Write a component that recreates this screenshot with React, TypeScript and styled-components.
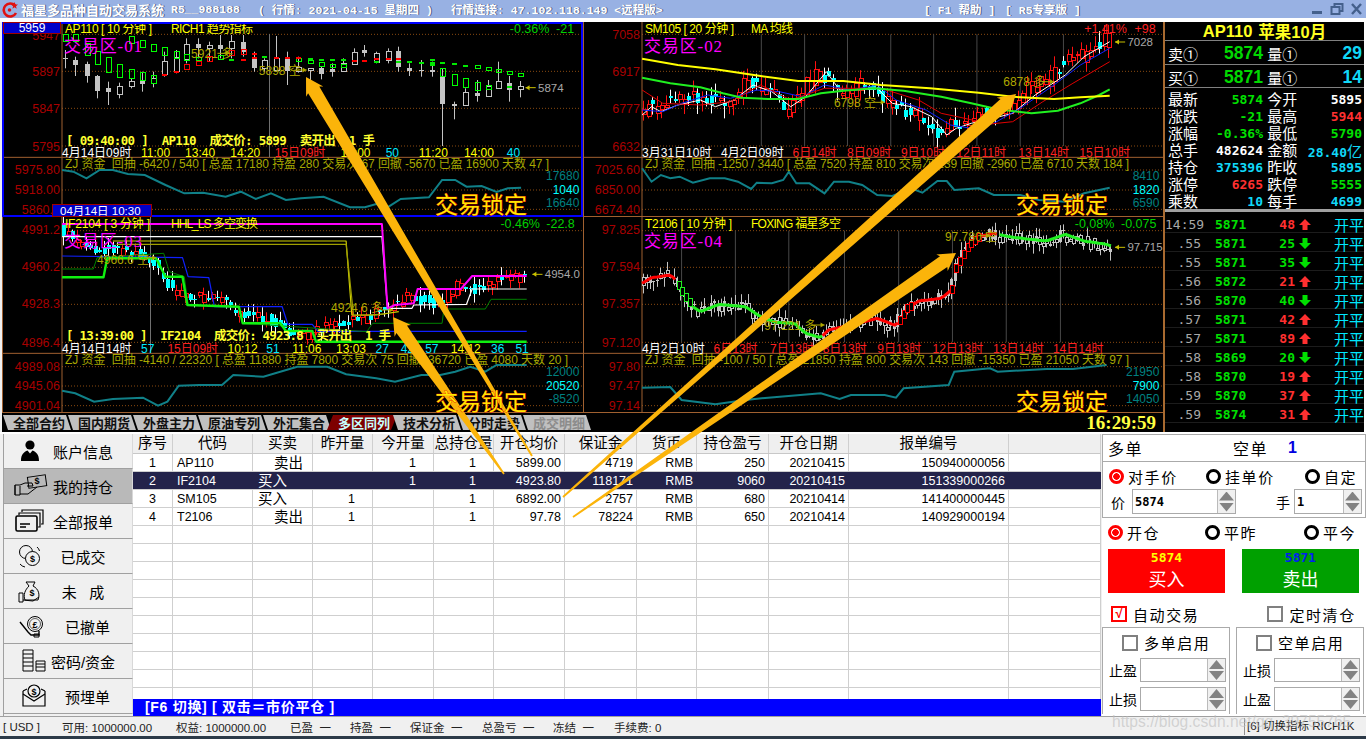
import React from 'react';
import styled, { createGlobalStyle } from 'styled-components';

const SANS = `"Liberation Sans", "Noto Sans CJK SC", sans-serif`;
const MONO = `"DejaVu Sans Mono", "Noto Sans CJK SC", monospace`;
const SERIF = `"Liberation Serif", "Noto Sans CJK SC", serif`;
const ZX = 2.658;

const Global = createGlobalStyle`
  html, body { margin: 0; padding: 0; background: #f0f0f0; }
  * { box-sizing: border-box; }
`;

const Page = styled.div`
  position: relative; width: 1366px; height: 739px; overflow: hidden;
  background: #f0f0f0; display: flex; flex-direction: column;
  font-family: ${SANS}; color: #000;
`;

/* ---------- title bar ---------- */
const TitleBar = styled.div`
  height: 18px; background: #98b1e3; display: flex; align-items: center;
  color: #fff; flex: none; padding-left: 2px; white-space: pre;
`;
const TitleName = styled.span`
  font-size: 13px; font-weight: 700; margin-left: 2px; width: 150px;
  text-shadow: 1px 0 #4a5a80;
`;
const TitleMono = styled.span<{ $w: number; $ml?: number }>`
  font: 700 11.5px ${`"Liberation Mono", "Noto Sans CJK SC", monospace`};
  width: ${p => p.$w}px; margin-left: ${p => p.$ml ?? 0}px;
  text-shadow: 1px 0 #4a5a80;
`;
const WinButtons = styled.div`
  display: flex; align-items: center; gap: 6px; margin-left: auto; padding-right: 3px;
  svg { display: block; }
`;
const TopGap = styled.div` height: 4px; background: #fff; flex: none; `;

/* ---------- workspace ---------- */
const Workspace = styled.div`
  height: 410px; flex: none; display: flex; background: #000;
  border-left: 2px solid #f0f0f0;
`;
const LeftColumn = styled.div` width: 1161px; display: flex; flex-direction: column; `;
const ChartGrid = styled.div`
  display: grid; grid-template-columns: 581px 580px; grid-template-rows: 195px 196px; flex: none;
`;
const ChartSvg = styled.svg` display: block; width: 100%; height: 100%; background: #000; `;
const ChartText = styled.text<{ $size?: number; $color?: string; $weight?: number; $family?: string }>`
  font-family: ${p => p.$family ?? SANS};
  font-size: ${p => p.$size ?? 12}px;
  font-weight: ${p => p.$weight ?? 400};
  fill: ${p => p.$color ?? '#fff'};
`;
const TabRow = styled.div`
  height: 19px; display: flex; align-items: center; background: #000; flex: none; position: relative;
`;
const Tab = styled.div<{ $active?: boolean; $dim?: boolean }>`
  width: 70px; height: 15px; margin-right: -5px; flex: none;
  display: flex; align-items: center; justify-content: center;
  font-size: 13px; font-weight: 700; padding-left: 4px;
  background: ${p => (p.$active ? '#7d0000' : '#c0c0c0')};
  color: ${p => (p.$active ? '#c8ffff' : p.$dim ? '#8c8c8c' : '#101010')};
  clip-path: ${p => p.$active
    ? 'polygon(6px 0, 100% 0, calc(100% - 6px) 100%, 0 100%)'
    : 'polygon(1px 0, calc(100% - 6px) 0, calc(100% - 1px) 100%, 6px 100%)'};
`;
const Clock = styled.div`
  margin-left: auto; padding-right: 7px; color: #ffff40;
  font: 700 19px ${SERIF};
`;

/* ---------- info panel ---------- */
const InfoPanel = styled.div`
  width: 203px; flex: none; border-left: 2px solid #a86a30;
  background: #000; color: #fff; display: flex; flex-direction: column;
  border-right: 2px solid #fff; height: 410px;
`;
const InfoHeader = styled.div`
  height: 19px; display: flex; align-items: center; justify-content: center; gap: 6px;
  color: #ffff20; font-size: 16.5px; font-weight: 700; border-bottom: 1px solid #808080; flex: none;
`;
const QuoteRow = styled.div`
  height: 23.5px; display: grid; grid-template-columns: 95px 1fr; flex: none;
  border-bottom: 1px solid #808080; padding: 2px 2px 0 3px;
`;
const QuoteCell = styled.div`
  display: flex; align-items: center; justify-content: space-between; font-size: 15px;
`;
const QuoteValue = styled.span<{ $color: string }>`
  color: ${p => p.$color}; font: 700 17.5px "Liberation Sans", sans-serif;
`;
const StatGrid = styled.div`
  display: grid; grid-template-columns: 95px 1fr; grid-auto-rows: 17px;
  padding: 3px 2px 0 3px; flex: none; border-bottom: 3px solid #a0a0a0; height: 124px;
`;
const StatCell = styled.div`
  display: flex; align-items: center; justify-content: space-between; font-size: 15px;
  line-height: 17px;
`;
const StatValue = styled.span<{ $color: string }>`
  color: ${p => p.$color}; font: 700 13px ${MONO};
`;
const Unit = styled.span` font: 400 15px "Noto Sans CJK SC", sans-serif; `;
const TradeList = styled.div` flex: 1; display: flex; flex-direction: column; padding-top: 2px; `;
const TradeRow = styled.div`
  height: 19px; display: grid; flex: none;
  grid-template-columns: 36px 50px 44px 18px 1fr; align-items: center;
  border-bottom: 1px solid #1c1c1c;
`;
const TradeTime = styled.span`
  color: #a8a8a8; font: 400 13px ${MONO}; text-align: right;
`;
const TradePrice = styled.span`
  color: #00e000; font: 700 13px ${MONO}; padding-left: 14px;
`;
const TradeVol = styled.span<{ $up: boolean }>`
  color: ${p => (p.$up ? '#ff3030' : '#00e000')}; font: 700 13px ${MONO}; text-align: right;
`;
const TradeArrow = styled.svg` display: block; margin-left: 4px; `;
const TradeFlag = styled.span`
  color: #00e8ff; font-size: 15px; text-align: right; white-space: nowrap;
`;

/* ---------- lower area ---------- */
const Lower = styled.div`
  flex: none; height: 284px; display: flex; border-top: 2px solid #fff; background: #f0f0f0;
`;
const Sidebar = styled.div`
  width: 130px; margin-left: 3px; display: flex; flex-direction: column; flex: none;
  border-left: 1px solid #a0a0a0;
`;
const NavButton = styled.div<{ $active?: boolean }>`
  height: 35px; flex: none; display: flex; align-items: center;
  background: ${p => (p.$active ? '#b9b9b9' : '#f0f0f0')};
  border-bottom: 1px solid #a0a0a0; border-right: 1px solid #d8d8d8;
`;
const NavIcon = styled.svg` width: 44px; height: 26px; flex: none; display: block; color: #000; `;
const NavLabel = styled.span<{ $shift?: number }>`
  width: 76px; text-align: center; font-size: 15px; white-space: pre; margin-left: -3px;
  padding-left: ${p => p.$shift ?? 0}px;
`;

const TableWrap = styled.div` width: 968px; flex: none; display: flex; flex-direction: column; `;
const HeadRow = styled.div`
  height: 20px; display: flex; background: #efefef; flex: none; border-bottom: 1px solid #c8c8c8;
`;
const HeadCell = styled.div<{ $w: number }>`
  width: ${p => p.$w}px; flex: none; text-align: center; font-size: 14.5px; line-height: 18px;
  border-right: 1px solid #cfcfcf; white-space: nowrap; overflow: hidden;
`;
const Body = styled.div` height: 245px; overflow: hidden; background: #fff; flex: none; `;
const DataRow = styled.div<{ $sel?: boolean }>`
  height: 18px; display: flex; border-bottom: 1px solid #cfcfcf;
  background: ${p => (p.$sel ? '#23234a' : '#fff')};
  color: ${p => (p.$sel ? '#fff' : '#000')};
`;
const DataCell = styled.div<{ $w: number; $align?: string; $pl?: number; $pr?: number; $cjk?: boolean; $sel?: boolean }>`
  width: ${p => p.$w}px; flex: none; border-right: 1px solid ${p => (p.$sel ? '#23234a' : '#cfcfcf')};
  text-align: ${p => p.$align ?? 'right'};
  padding-left: ${p => p.$pl ?? 0}px; padding-right: ${p => p.$pr ?? 0}px; padding-top: 1px;
  font-size: ${p => (p.$cjk ? 14.5 : 12.5)}px; line-height: 16px; white-space: nowrap; overflow: hidden;
`;
const FootBar = styled.div`
  height: 17px; background: #0000ff; color: #fff; font-size: 14px; font-weight: 700; letter-spacing: 0.7px;
  padding-left: 12px; line-height: 17px; flex: none; white-space: pre;
`;

const OrderPanel = styled.div`
  width: 264px; margin-left: 1px; flex: none; display: flex; flex-direction: column; background: #fff;
  font-size: 15px;
`;
const SideRow = styled.div`
  height: 28px; flex: none; border: 1px solid #aaa; display: flex; align-items: center; padding-left: 5px;
  font-size: 16px; letter-spacing: 1.5px;
`;
const SideText = styled.span<{ $ml?: number; $color?: string }>`
  margin-left: ${p => p.$ml ?? 0}px; color: ${p => p.$color ?? '#000'};
`;
const PriceBox = styled.div`
  height: 56px; flex: none; border: 1px solid #aaa; border-top: none; padding: 4px 0 0 6px;
`;
const RadioRow = styled.div`
  display: grid; grid-template-columns: 97px 99px 1fr; align-items: center; height: 20px;
`;
const RadioItem = styled.div` display: flex; align-items: center; gap: 4px; white-space: nowrap; letter-spacing: 1.6px; font-size: 15px; `;
const RadioDot = styled.span<{ $on?: boolean }>`
  width: 15px; height: 15px; border-radius: 50%; flex: none; display: block;
  border: 3px solid ${p => (p.$on ? '#ff0000' : '#000')};
  background: ${p => (p.$on ? 'radial-gradient(circle, #ff0000 0 3px, #fff 3.5px)' : '#fff')};
`;
const SpinRow = styled.div` display: flex; align-items: center; margin-top: 3px; `;
const SmallLabel = styled.span<{ $ml?: number; $w: number }>`
  width: ${p => p.$w}px; margin-left: ${p => p.$ml ?? 0}px; flex: none; font-size: 14px; white-space: nowrap;
`;
const SpinBox = styled.div<{ $w: number; $h?: number }>`
  width: ${p => p.$w}px; height: ${p => p.$h ?? 25}px; flex: none; display: flex; align-items: center;
  border: 1px solid #aaa; background: #fff; font: 700 12px ${MONO}; padding-left: 2px;
`;
const SpinValue = styled.span` flex: 1; `;
const Spinner = styled.div`
  width: 18px; height: 100%; flex: none; border-left: 1px solid #bbb; display: flex; flex-direction: column;
  justify-content: center; align-items: center; gap: 2px; background: #f0f0f0;
`;
const Tri = styled.i<{ $down?: boolean }>`
  display: block; width: 15px; height: 9px; background: #828282;
  clip-path: ${p => (p.$down ? 'polygon(0 0, 100% 0, 50% 100%)' : 'polygon(50% 0, 100% 100%, 0 100%)')};
`;
const OpenSection = styled.div` height: 109px; flex: none; padding: 4px 0 0 6px; `;
const BuySell = styled.div` display: flex; gap: 17px; margin-top: 7px; `;
const TradeBtn = styled.div<{ $bg: string }>`
  width: 117px; height: 44px; background: ${p => p.$bg}; color: #fff; padding-top: 1px;
  display: flex; flex-direction: column; align-items: center;
  font-size: 18px; line-height: 26px;
`;
const BtnPrice = styled.span<{ $color: string }>`
  color: ${p => p.$color}; font: 700 13px/16px ${MONO}; margin-bottom: 1px;
`;
const CheckRow = styled.div` display: flex; align-items: center; margin: 12px 0 0 3px; letter-spacing: 1.6px; height: 18px; `;
const CheckBox = styled.span<{ $on?: boolean }>`
  width: 16px; height: 16px; flex: none; display: flex; align-items: center; justify-content: center;
  border: 2px solid ${p => (p.$on ? '#ff0000' : '#808080')}; background: #fff;
  color: #ff0000; font-size: 13px; line-height: 12px; font-weight: 700; margin-right: 6px; letter-spacing: 0;
`;
const Spacer = styled.span<{ $w: number }>` width: ${p => p.$w}px; flex: none; `;
const LimitRow = styled.div` display: flex; gap: 6px; height: 87px; flex: none; padding-right: 1px; `;
const LimitBox = styled.div`
  width: 128px; border: 1px solid #aaa; border-bottom: none; padding: 4px 0 0 6px; background: #fff; flex: none;
`;
const LimitHead = styled.div` display: flex; align-items: center; padding-left: 13px; height: 21px; letter-spacing: 1.6px; `;
const LimitField = styled.div` display: flex; align-items: center; margin-top: 5px; `;

const StatusBar = styled.div`
  height: 20px; flex: none; display: flex; align-items: center; font-size: 12px; color: #222;
  border-top: 1px solid #a0a0a0; padding-left: 3px; position: relative; background: #f0f0f0; white-space: pre;
`;
const StatusItem = styled.span<{ $w: number }>` width: ${p => p.$w}px; flex: none; font-size: 11.5px; `;
const StatusRight = styled.div`
  margin-left: auto; width: 122px; height: 17px; border-left: 1px solid #909090; padding-left: 2px; font-size: 11.5px; line-height: 17px;
`;
const BottomEdge = styled.div` height: 3px; background: #2c3a48; flex: none; `;
const Watermark = styled.div`
  position: absolute; left: 1112px; top: 713px; color: rgba(190, 190, 190, 0.62);
  font: 15.6px "Liberation Sans", sans-serif; white-space: nowrap; pointer-events: none;
`;
const Overlay = styled.svg`
  position: absolute; left: 0; top: 0; width: 1366px; height: 739px; pointer-events: none;
`;

/* ---------- chart data ---------- */
type P = [number, number];
type Candle = [number, number, number, number, number, string];

interface Cfg {
  x0: number; y0: number; w: number; h: number; ox: number; oy: number;
  axisX: number; title: string; titleW: number; ind: string; indW: number;
  chg: string; chgX: number; chg2: string; chg2X: number; chgColor: string;
  area: string; candleW: number;
  grid: number[]; axis: [number, string][]; sepY: number; verticals?: number[];
  dates: [number, string, string][];
  legend: string; legendW: number; legendY: number;
  lower: [number, string][]; lowerGrid: number[];
  right: [number, string, string][]; teal: P[];
  lines: { pts: P[]; color: string; width: number }[];
  boxes?: { x: number; y: number; color: string }[];
  candles: Candle[];
  notes: [number, number, string, number, number][];
  price: [number, number, string];
  deal?: [string, number, number];
  areaY: number;
}

function rng(seed: number) {
  let s = seed;
  return () => { s = (s * 16807) % 2147483647; return s / 2147483647; };
}
function interp(path: P[], x: number) {
  for (let i = 0; i < path.length - 1; i++) {
    if (x >= path[i][0] && x <= path[i + 1][0]) {
      const t = (x - path[i][0]) / (path[i + 1][0] - path[i][0]);
      return path[i][1] + (path[i + 1][1] - path[i][1]) * t;
    }
  }
  return path[path.length - 1][1];
}
function gen(path: P[], step: number, seed: number, up: string, down: string, noise: number): Candle[] {
  const r = rng(seed); const out: Candle[] = [];
  for (let x = path[0][0] + 3; x < path[path.length - 1][0]; x += step) {
    const a = interp(path, x) + (r() - 0.5) * noise;
    const b = interp(path, x + step) + (r() - 0.5) * noise;
    const top = Math.min(a, b); const bot = Math.max(a, b) + 3;
    out.push([x, top - r() * noise * 0.9, bot + r() * noise * 0.9, top, bot, b < a ? up : down]);
  }
  return out;
}

const c1Candles: Candle[] = [
  [172,150,205,175,178,'f'],[200,170,228,180,195,'f'],[230,185,248,192,228,'f'],[258,225,295,228,272,'f'],
  [288,245,315,265,278,'f'],[317,248,295,258,282,'h'],[347,235,265,243,258,'h'],[378,215,275,243,252,'f'],
  [408,215,262,235,250,'h'],[437,155,230,183,222,'h'],[467,150,220,170,212,'h'],[495,115,190,133,178,'h'],
  [525,115,175,133,145,'f'],[555,125,185,135,145,'h'],[585,105,175,135,148,'f'],[615,105,175,123,145,'h'],
  [645,105,170,125,155,'f'],[675,155,215,175,205,'f'],[703,175,215,180,205,'h'],[733,108,215,175,210,'h'],
  [763,155,255,178,215,'f'],[793,170,218,200,212,'h'],[823,205,255,205,212,'h'],[852,200,238,205,222,'f'],
  [882,190,230,207,217,'f'],[912,175,215,190,215,'h'],[940,145,195,155,190,'h'],[968,135,170,150,160,'f'],
  [1000,155,190,158,185,'h'],[1030,145,190,152,180,'h'],[1059,140,215,152,200,'f'],[1088,190,228,205,213,'f'],
  [1118,180,230,210,214,'f'],[1147,185,230,210,215,'f'],[1176,205,438,232,312,'f'],[1208,305,358,313,318,'f'],
  [1237,265,318,277,315,'h'],[1267,240,305,280,288,'f'],[1296,240,290,258,287,'h'],[1325,185,265,243,265,'h'],
  [1354,228,305,250,270,'f'],[1383,243,292,258,268,'h'],
];
const gBox: P[] = [[172,103],[200,103],[230,130],[258,155],[288,172],[317,192],[347,208],[378,216],[408,226],[347,108],[378,120],[408,133],[437,142],[467,153],[495,163],[525,172],[585,165],[793,176],[823,181],[852,187],[882,194],[912,194],[1176,205],[1208,222],[1237,235],[1267,247],[1296,256],[1325,208],[1354,213],[1383,220],[1267,196],[1296,202]];
const gBoxH = [22,22,35,37,46,40,27,24,24,22,22,22,23,22,17,10,13,9,9,12,9,9,25,33,27,23,12,10,10,10,10,10];
const rBox: [number, number, number][] = [[495,193,15],[525,183,14],[555,170,15],[615,152,13],[645,148,14]];
const gDash: P[] = [[615,176],[703,168],[823,173],[852,176],[882,177],[912,176],[1000,182],[1059,182],[1088,183],[1118,185],[1147,186],[1176,186],[1208,188],[1237,194],[1147,178],[1147,192],[1354,258]];
const rDash: P[] = [[437,222],[467,214],[645,176],[675,158],[675,172],[733,170],[763,172],[793,170],[940,180],[968,180],[1000,175],[1030,175],[1059,175]];

const path2: P[] = [[165,365],[190,310],[220,320],[260,290],[320,285],[370,305],[410,300],[450,240],[500,265],[540,290],[555,340],[590,280],[640,215],[680,250],[720,285],[770,240],[810,290],[870,330],[915,345],[955,400],[1000,370],[1040,375],[1085,340],[1150,320],[1200,265],[1250,240],[1300,185],[1350,160],[1408,115]];
const path3: P[] = [[165,40],[240,95],[290,100],[400,120],[440,170],[470,230],[520,240],[600,250],[640,300],[720,310],[760,335],[820,365],[880,330],[960,310],[1040,285],[1090,240],[1170,265],[1230,205],[1280,225],[1320,200],[1400,178]];
const path4: P[] = [[165,205],[190,188],[240,180],[255,195],[270,225],[300,275],[320,290],[370,268],[440,275],[480,305],[520,322],[570,325],[600,355],[640,368],[660,345],[720,330],[790,310],[840,332],[870,280],[900,258],[960,250],[990,222],[1000,160],[1030,95],[1060,65],[1100,55],[1140,65],[1190,72],[1240,78],[1290,58],[1340,78],[1400,88],[1415,95]];

const seg4 = (a: number, b: number): P[] => {
  const pts: P[] = [];
  for (let x = a; x <= b; x += 8) pts.push([x, interp(path4, x)]);
  return pts;
};
const boxes4 = (a: number, b: number, color: string) => {
  const out: { x: number; y: number; color: string }[] = [];
  for (let x = a; x <= b; x += 10) out.push({ x, y: interp(path4, x), color });
  return out;
};

const charts: Cfg[] = [
  {
    x0: 2, y0: 22, w: 581, h: 195, ox: 0, oy: 0, axisX: 62, candleW: 5,
    title: 'AP110 [ 10 分钟 ]', titleW: 87, ind: 'RICH1 趋势指标', indW: 82,
    chg: '-0.36%', chgX: 1355, chg2: '-21', chg2X: 1478, chgColor: '#00d000',
    area: '交易区-01', areaY: 140,
    grid: [103, 214, 325, 438], axis: [[108, '5947'], [216, '5897'], [327, '5847'], [441, '5795']], sepY: 472,
    dates: [[165, '4月14日09时', '#fff'], [375, '11:00', '#ffff00'], [492, '13:40', '#ffff00'], [612, '14:20', '#ffff00'], [730, '15日09时', '#ff2020'], [905, '10:00', '#ffff00'], [1025, '50', '#00e8ff'], [1113, '11:20', '#ffff00'], [1233, '14:00', '#ffff00'], [1347, '40', '#00e8ff']],
    legend: 'ZJ 资金  回抽 -6420 / 540 [ 总盈 17180 持盈 280 交易次 67 回撤 -5670 已盈 16900 天数 47 ]', legendW: 484, legendY: 492,
    lower: [[510, '5975.80'], [570, '5918.00'], [630, '5860.2']], lowerGrid: [510, 570, 628],
    right: [[528, '17680', '#008080'], [570, '1040', '#00ffff'], [608, '16640', '#008080']],
    teal: [[165,510],[195,515],[230,535],[265,510],[300,510],[340,522],[385,525],[440,555],[490,580],[540,578],[600,590],[640,575],[680,597],[720,580],[760,600],[800,595],[860,590],[930,622],[970,622],[1000,612],[1030,622],[1065,597],[1140,592],[1175,540],[1210,540],[1240,560],[1280,558],[1320,576],[1350,565],[1385,563]],
    lines: [], candles: c1Candles,
    notes: [[508, 162, '5921 多', 610, 160], [688, 213, '5898 空', 815, 210]],
    price: [1430, 263, '5874'],
    deal: ['[ 09:40:00 ]  AP110  成交价: 5899  卖开出  1 手', 421, 309],
  },
  {
    x0: 583, y0: 22, w: 580, h: 195, ox: 580, oy: 0, axisX: 642, candleW: 4,
    title: 'SM105 [ 20 分钟 ]', titleW: 89, ind: 'MA 均线', indW: 42,
    chg: '+1.41%', chgX: 1340, chg2: '+98', chg2X: 1474, chgColor: '#ff2020',
    area: '交易区-02', areaY: 140,
    grid: [103, 214, 325, 438], axis: [[105, '7058'], [216, '6917'], [327, '6777'], [441, '6632']], sepY: 472,
    verticals: [482, 597, 711, 826, 940, 1055, 1170, 1285],
    dates: [[165, '3月31日10时', '#fff'], [375, '4月2日09时', '#fff'], [565, '6日14时', '#ff2020'], [710, '8日09时', '#ff2020'], [853, '9日10时', '#ff2020'], [1000, '12日11时', '#ff2020'], [1165, '13日14时', '#ff2020'], [1327, '15日10时', '#ff2020']],
    legend: 'ZJ 资金  回抽 -1250 / 3440 [ 总盈 7520 持盈 810 交易次 139 回撤 -2960 已盈 6710 天数 184 ]', legendW: 484, legendY: 492,
    lower: [[510, '7025.60'], [570, '6850.00'], [630, '6674.40']], lowerGrid: [510, 570, 628],
    right: [[528, '8410', '#008080'], [570, '1820', '#00ffff'], [608, '6590', '#008080']],
    teal: [[165,505],[190,545],[215,525],[240,535],[265,530],[300,548],[345,535],[385,535],[420,545],[455,567],[470,548],[510,550],[540,540],[555,515],[575,550],[610,550],[650,580],[675,545],[715,545],[750,555],[790,585],[830,588],[880,565],[910,578],[950,543],[975,543],[995,570],[1060,565],[1100,585],[1170,585],[1220,600],[1290,605],[1340,580],[1408,563]],
    lines: [
      { pts: [[165,345],[190,320],[215,335],[260,315],[320,300],[360,320],[410,300],[460,255],[510,275],[560,320],[600,290],[655,215],[690,270],[730,270],[790,265],[830,310],[880,320],[935,350],[975,405],[1000,385],[1040,370],[1080,360],[1150,340],[1210,285],[1290,225],[1340,170],[1408,125]], color: '#fff', width: 1 },
      { pts: [[165,330],[220,335],[270,310],[340,285],[400,295],[470,270],[530,275],[590,290],[650,255],[720,270],[790,255],[840,300],[920,330],[985,375],[1040,385],[1100,370],[1170,325],[1260,255],[1330,195],[1408,145]], color: '#1020ff', width: 1 },
      { pts: [[165,270],[220,310],[320,315],[400,305],[480,255],[560,300],[650,265],[720,265],[800,265],[900,300],[960,340],[1010,352],[1090,372],[1150,365],[1230,305],[1310,250],[1408,185]], color: '#e00000', width: 1 },
      { pts: [[165,233],[240,250],[320,262],[380,280],[430,293],[500,297],[580,297],[640,280],[700,272],[780,265],[860,272],[960,290],[1040,310],[1110,328],[1200,340],[1270,332],[1330,310],[1380,285],[1408,268]], color: '#20f020', width: 2 },
      { pts: [[165,176],[260,195],[360,208],[480,228],[580,243],[700,243],[800,255],[930,265],[1060,278],[1150,290],[1260,297],[1330,292],[1408,287]], color: '#ffff00', width: 2 },
    ],
    candles: gen(path2, 12, 71, 'r', 'c', 40),
    notes: [[675, 310, '6798 空', 810, 307], [1125, 245, '6878 多', 1260, 245]],
    price: [1455, 126, '7028'],
  },
  {
    x0: 2, y0: 217, w: 581, h: 196, ox: 0, oy: 215, axisX: 62, candleW: 4,
    title: 'IF2104 [ 3 分钟 ]', titleW: 85, ind: 'HHL_LS 多空变换', indW: 87,
    chg: '-0.46%', chgX: 1330, chg2: '-22.8', chg2X: 1452, chgColor: '#00d000',
    area: '交易区-03', areaY: 80,
    grid: [47, 157, 268, 382], axis: [[45, '4991.2'], [155, '4960.2'], [268, '4928.3'], [383, '4896.4']], sepY: 415,
    dates: [[165, '4月14日14时', '#fff'], [375, '57', '#00e8ff'], [445, '15日09时', '#ff2020'], [605, '10:12', '#ffff00'], [708, '51', '#00e8ff'], [777, '11:06', '#ffff00'], [893, '13:03', '#ffff00'], [998, '27', '#00e8ff'], [1065, '42', '#00e8ff'], [1130, '57', '#00e8ff'], [1198, '14:12', '#ffff00'], [1305, '36', '#00e8ff'], [1370, '51', '#00e8ff']],
    legend: 'ZJ 资金  回抽 -4140 / 22320 [ 总盈 11880 持盈 7800 交易次 75 回撤 -36720 已盈 4080 天数 20 ]', legendW: 503, legendY: 435,
    lower: [[455, '4989.08'], [513, '4945.06'], [572, '4901.04']], lowerGrid: [455, 513, 572],
    right: [[470, '12000', '#008080'], [512, '20520', '#00ffff'], [552, '-8520', '#008080']],
    teal: [[165,527],[200,535],[250,560],[300,552],[380,548],[420,572],[445,560],[475,512],[530,510],[590,510],[620,480],[700,485],[790,455],[870,455],[920,478],[1000,490],[1050,500],[1120,480],[1170,480],[1210,470],[1250,455],[1290,470],[1320,450],[1400,450]],
    lines: [
      { pts: [[165,123],[485,128],[500,185],[555,188],[570,275],[750,275],[765,328],[830,328],[845,349],[1400,349]], color: '#1020ff', width: 1.2 },
      { pts: [[165,162],[248,162],[258,128],[435,115],[450,170],[490,185],[500,270],[635,275],[645,325],[975,350],[990,325],[1175,325],[1180,282],[1290,282],[1305,253],[1400,253]], color: '#008000', width: 1 },
      { pts: [[300,78],[920,78],[935,300],[1000,300],[1060,290]], color: '#d0d000', width: 1.2 },
      { pts: [[310,88],[920,88],[940,302],[1025,297]], color: '#a0a000', width: 1.2 },
      { pts: [[165,187],[275,187],[285,130],[415,130],[440,185],[485,185],[498,270],[635,275],[645,325],[745,325],[760,348],[830,348],[840,380],[1400,380]], color: '#10f010', width: 2.4 },
      { pts: [[165,65],[1015,65],[1030,280],[1095,280],[1100,270],[1240,268],[1255,222],[1400,222]], color: '#fff', width: 1.2 },
      { pts: [[165,27],[1015,27],[1030,280],[1050,270],[1100,265],[1110,222],[1225,222],[1255,183],[1400,183]], color: '#ff00ff', width: 2 },
    ],
    candles: gen(path3, 12, 37, 'r', 'c', 30),
    notes: [[258, 135, '4966.6 空', 415, 128], [880, 280, '4924.6 多', 1045, 285]],
    price: [1448, 178, '4954.0'],
    deal: ['[ 13:39:00 ]  IF2104  成交价: 4923.8  买开出  1 手', 362, 325],
  },
  {
    x0: 583, y0: 217, w: 580, h: 196, ox: 580, oy: 215, axisX: 642, candleW: 3,
    title: 'T2106 [ 10 分钟 ]', titleW: 87, ind: 'FOXING 福星多空', indW: 90,
    chg: '-0.08%', chgX: 1315, chg2: '-0.075', chg2X: 1438, chgColor: '#00d000',
    area: '交易区-04', areaY: 80,
    grid: [47, 157, 268, 382], axis: [[45, '97.825'], [155, '97.594'], [268, '97.357'], [383, '97.120']], sepY: 415,
    verticals: [270, 413, 555, 703, 847, 990, 1133, 1277],
    dates: [[165, '4月2日10时', '#fff'], [355, '6日13时', '#ff2020'], [505, '7日13时', '#ff2020'], [645, '8日13时', '#ff2020'], [790, '9日13时', '#ff2020'], [937, '12日13时', '#ff2020'], [1098, '13日14时', '#ff2020'], [1257, '14日14时', '#ff2020']],
    legend: 'ZJ 资金  回抽 -100 / 50 [ 总盈 21850 持盈 800 交易次 143 回撤 -15350 已盈 21050 天数 97 ]', legendW: 484, legendY: 435,
    lower: [[455, '97.80'], [513, '97.47'], [572, '97.14']], lowerGrid: [455, 513, 572],
    right: [[472, '21950', '#008080'], [513, '7900', '#00ffff'], [553, '14050', '#008080']],
    teal: [[165,518],[240,516],[270,555],[360,568],[440,555],[500,548],[640,535],[690,552],[720,540],[810,540],[840,548],[860,520],[980,510],[995,470],[1090,460],[1110,470],[1240,462],[1310,462],[1400,450]],
    lines: [
      { pts: seg4(165, 260), color: '#ff0000', width: 3 },
      { pts: seg4(300, 645), color: '#20f020', width: 3 },
      { pts: seg4(645, 850), color: '#ff0000', width: 3 },
      { pts: seg4(885, 990), color: '#ff0000', width: 3 },
      { pts: seg4(1060, 1115), color: '#ff0000', width: 3 },
      { pts: seg4(1115, 1415), color: '#20f020', width: 3 },
    ],
    boxes: [...boxes4(262, 300, '#20f020'), ...boxes4(850, 885, '#ff0000'), ...boxes4(990, 1060, '#ff0000')],
    candles: gen(path4, 9, 113, 'g', 'h', 32),
    notes: [[970, 65, '97.780 空', 1090, 62], [490, 333, '97.221 多', 650, 330]],
    price: [1455, 97, '97.715'],
  },
];

const Chart: React.FC<{ c: Cfg; selected?: boolean }> = ({ c, selected }) => {
  const X = (v: number) => c.ox + v / ZX;
  const Y = (v: number) => c.oy + v / 3;
  const pl = (pts: P[]) => pts.map(([x, y]) => `${X(x).toFixed(1)},${Y(y).toFixed(1)}`).join(' ');
  const right = c.x0 + c.w;
  const bottom = c.y0 + c.h;
  const label = c.axisX - 2;
  const first = c.ox === 0 && c.oy === 0;
  const headY = Y(c.oy === 0 ? 88 : 28);
  return (
    <ChartSvg viewBox={`${c.x0} ${c.y0} ${c.w} ${c.h}`}>
      {c.grid.concat(c.lowerGrid).map(y => (
        <line key={y} x1={c.axisX} x2={right} y1={Y(y)} y2={Y(y)} stroke="#8a4a10" strokeDasharray="1 2" />
      ))}
      {(c.verticals ?? []).map(x => (
        <line key={x} x1={X(x)} x2={X(x)} y1={Y(c.grid[0])} y2={Y(c.grid[3])} stroke="#484848" />
      ))}
      <line x1={c.axisX} x2={c.axisX} y1={c.y0} y2={bottom} stroke="#a06030" />
      <line x1={c.x0} x2={right} y1={Y(c.sepY)} y2={Y(c.sepY)} stroke="#a06030" />
      <line x1={c.x0} x2={right} y1={bottom - 0.5} y2={bottom - 0.5} stroke="#a06030" />
      <line x1={c.x0 + 0.5} x2={c.x0 + 0.5} y1={c.y0} y2={bottom} stroke="#a06030" />
      {c.axis.map(([y, t]) => (
        <ChartText key={t} x={label} y={Y(y)} textAnchor="end" dominantBaseline="central" $color="#a80000" $size={12.5}>{t}</ChartText>
      ))}
      {c.lower.map(([y, t]) => (
        <ChartText key={t} x={label} y={Y(y)} textAnchor="end" dominantBaseline="central" $color="#a80000" $size={12.5}>{t}</ChartText>
      ))}
      {c.candles.map(([x, hi, lo, top, bot, s], i) => {
        const cx = Math.round(X(x));
        const solid = s === 'c' || s === 'f' || s === 'g';
        const stroke = s === 'r' ? '#ff1010' : s === 'c' ? '#00ffff' : '#c4c4c4';
        const fill = s === 'c' ? '#00ffff' : solid ? '#c4c4c4' : '#000';
        const w = c.candleW;
        return (
          <g key={i}>
            <line x1={cx + 0.5} x2={cx + 0.5} y1={Y(hi)} y2={Y(lo)} stroke={s === 'c' ? '#fff' : stroke} />
            <rect x={cx - Math.floor((w - 1) / 2)} y={Math.round(Y(top))} width={w} height={Math.max(1, Math.round((bot - top) / 3))} fill={fill} stroke={solid ? 'none' : stroke} shapeRendering="crispEdges" />
          </g>
        );
      })}
      {first && (
        <g shapeRendering="crispEdges">
          <line x1={269.5} x2={269.5} y1={34} y2={157} stroke="#707070" />
          {gBox.map(([x, y], i) => (
            <rect key={i} x={Math.round(X(x)) - 2} y={Y(y)} width={5} height={gBoxH[i] / 3} fill="none" stroke="#00ff00" />
          ))}
          {rBox.map(([x, y, h], i) => (
            <rect key={i} x={Math.round(X(x)) - 2} y={Y(y)} width={5} height={h / 3} fill="none" stroke="#ff0000" />
          ))}
          {gDash.map(([x, y], i) => <rect key={i} x={Math.round(X(x)) - 2} y={Y(y)} width={5} height={2} fill="#00e800" />)}
          {rDash.map(([x, y], i) => <rect key={i} x={Math.round(X(x)) - 2} y={Y(y)} width={5} height={2} fill="#ff0000" />)}
        </g>
      )}
      {c.ox === 0 && c.oy === 215 && <line x1={150.5} x2={150.5} y1={217} y2={353} stroke="#707070" />}
      {c.lines.map((l, i) => (
        <polyline key={i} points={pl(l.pts)} fill="none" stroke={l.color} strokeWidth={l.width} strokeLinejoin="round" />
      ))}
      {(c.boxes ?? []).map((b, i) => (
        <rect key={i} x={Math.round(X(b.x)) - 2} y={Math.round(Y(b.y)) - 4} width={4} height={8} fill="#000" stroke={b.color} shapeRendering="crispEdges" />
      ))}
      <polyline points={pl(c.teal)} fill="none" stroke="#108088" strokeWidth={2} />
      <ChartText x={c.x0 === 2 ? 65 : 645} y={headY} dominantBaseline="central" $color="#ffff00" textLength={c.titleW} lengthAdjust="spacing">{c.title}</ChartText>
      <ChartText x={c.x0 === 2 ? 171 : 751} y={headY} dominantBaseline="central" $color="#ffff00" textLength={c.indW} lengthAdjust="spacing">{c.ind}</ChartText>
      <ChartText x={X(c.chgX)} y={headY} dominantBaseline="central" $color={c.chgColor} $size={12.5}>{c.chg}</ChartText>
      <ChartText x={X(c.chg2X)} y={headY} dominantBaseline="central" $color={c.chgColor} $size={12.5}>{c.chg2}</ChartText>
      <ChartText x={c.axisX + 2} y={Y(c.areaY)} dominantBaseline="central" $color="#ff00ff" $size={17} $family={SERIF} textLength={78} lengthAdjust="spacing">{c.area}</ChartText>
      {c.notes.map(([x, y, t, x2, y2]) => (
        <g key={t}>
          <ChartText x={X(x)} y={Y(y)} dominantBaseline="central" $color="#b0a800" $size={12}>{t}</ChartText>
          <line x1={X(x2 - 32)} x2={X(x2)} y1={Y(y2)} y2={Y(y2)} stroke="#b0a800" />
          <path d={`M${X(x2)} ${Y(y2)} l-4 -2.5 v5z`} fill="#b0a800" />
        </g>
      ))}
      <line x1={X(c.price[0] - 33)} x2={X(c.price[0] - 6)} y1={Y(c.price[1])} y2={Y(c.price[1])} stroke="#c8c000" />
      <path d={`M${X(c.price[0] - 33)} ${Y(c.price[1])} l4 -2.5 v5z`} fill="#c8c000" />
      <ChartText x={X(c.price[0])} y={Y(c.price[1])} dominantBaseline="central" $color="#a8a8a8" $size={11.5}>{c.price[2]}</ChartText>
      {c.dates.map(([x, t, col]) => (
        <ChartText key={t + x} x={X(x)} y={Y(c.sepY - 12)} dominantBaseline="central" $color={col} $size={12}>{t}</ChartText>
      ))}
      <ChartText x={c.axisX + 3} y={Y(c.legendY)} dominantBaseline="central" $color="#a8a800" $size={12} textLength={c.legendW} lengthAdjust="spacing" xmlSpace="preserve">{c.legend}</ChartText>
      {c.right.map(([y, t, col]) => (
        <ChartText key={t} x={X(1540)} y={Y(y)} textAnchor="end" dominantBaseline="central" $color={col} $size={12}>{t}</ChartText>
      ))}
      {c.deal && (
        <ChartText x={66} y={Y(c.deal[1])} dominantBaseline="central" $color="#ffff30" $weight={700} $size={12.5} $family={MONO} textLength={c.deal[2]} lengthAdjust="spacing" xmlSpace="preserve">{c.deal[0]}</ChartText>
      )}
      {selected && (
        <g>
          <rect x={3} y={23} width={579} height={193} fill="none" stroke="#0000ff" strokeWidth={2} />
          <rect x={3.5} y={22.5} width={57} height={11} fill="#0000c8" stroke="#a00000" />
          <ChartText x={32} y={28} textAnchor="middle" dominantBaseline="central" $size={12}>5959</ChartText>
          <rect x={52.5} y={204.5} width={99} height={12} fill="#0000c8" stroke="#a00000" />
          <ChartText x={60} y={211} dominantBaseline="central" $size={11.5}>04月14日 10:30</ChartText>
        </g>
      )}
    </ChartSvg>
  );
};

function arrowPoints(tip: P, tail: P) {
  const dx = tail[0] - tip[0]; const dy = tail[1] - tip[1];
  const len = Math.hypot(dx, dy); const ux = dx / len; const uy = dy / len; const nx = -uy; const ny = ux;
  const pt = (d: number, s: number) => `${(tip[0] + ux * d + nx * s).toFixed(1)},${(tip[1] + uy * d + ny * s).toFixed(1)}`;
  return [pt(0, 0), pt(17, 10), pt(15, 6.5), pt(len, 0.9), pt(len, -0.9), pt(15, -6.5), pt(17, -10)].join(' ');
}
const arrows: [P, P][] = [
  [[306, 77], [532, 456]],
  [[393, 317], [504, 474]],
  [[1016, 94], [563, 497]],
  [[956, 253], [573, 517]],
];
const locks: P[] = [[435, 205], [1016, 205], [435, 402], [1016, 402]];

/* ---------- quote data ---------- */
const G = '#00e000'; const R = '#ff3030'; const C = '#10d8f8'; const W = '#fff';
const stats: [string, string, string, string, string, string, string?][] = [
  ['最新', '5874', G, '今开', '5895', W],
  ['涨跌', '-21', G, '最高', '5944', R],
  ['涨幅', '-0.36%', G, '最低', '5790', G],
  ['总手', '482624', W, '金额', '28.40', C, '亿'],
  ['持仓', '375396', C, '昨收', '5895', C],
  ['涨停', '6265', R, '跌停', '5555', G],
  ['乘数', '10', C, '每手', '4699', C],
];
const trades: [string, string, string, boolean][] = [
  ['14:59', '5871', '48', true], ['.55', '5871', '25', false], ['.55', '5871', '35', false],
  ['.56', '5872', '21', true], ['.56', '5870', '40', false], ['.57', '5871', '42', true],
  ['.57', '5871', '89', true], ['.58', '5869', '20', false], ['.58', '5870', '19', true],
  ['.59', '5870', '37', true], ['.59', '5874', '31', true],
];

const cols = [
  { t: '序号', w: 40 }, { t: '代码', w: 80 }, { t: '买卖', w: 60 }, { t: '昨开量', w: 60 }, { t: '今开量', w: 61 },
  { t: '总持仓量', w: 60 }, { t: '开仓均价', w: 71 }, { t: '保证金', w: 72 }, { t: '货币', w: 60 },
  { t: '持仓盈亏', w: 72 }, { t: '开仓日期', w: 80 }, { t: '报单编号', w: 160 }, { t: '', w: 92 },
];
const rows = [
  ['1', 'AP110', '卖出', '', '1', '1', '5899.00', '4719', 'RMB', '250', '20210415', '150940000056', ''],
  ['2', 'IF2104', '买入', '', '1', '1', '4923.80', '118171', 'RMB', '9060', '20210415', '151339000266', ''],
  ['3', 'SM105', '买入', '1', '', '1', '6892.00', '2757', 'RMB', '680', '20210414', '141400000445', ''],
  ['4', 'T2106', '卖出', '1', '', '1', '97.78', '78224', 'RMB', '650', '20210414', '140929000194', ''],
];
const EMPTY = cols.map(() => '');
const allRows = [...rows, ...Array.from({ length: 10 }, () => EMPTY)];

const cellProps = (i: number, v: string) => {
  if (i === 0) return { $align: 'center' };
  if (i === 1) return { $align: 'left', $pl: 4 };
  if (i === 2) return { $align: 'left', $pl: v === '卖出' ? 21 : 5, $cjk: true };
  if (i >= 3 && i <= 5) return { $pr: 17 };
  return { $pr: 3 };
};

const Icon = {
  user: <g fill="currentColor"><circle cx="22" cy="7" r="4.6" /><path d="M13 23c0-7 3-9 6.5-10.5l2.5 3 2.5-3C28 14 31 16 31 23z" /></g>,
  hand: <g fill="none" stroke="currentColor"><rect x="20" y="3" width="18" height="11" transform="rotate(-8 29 8)" /><path d="M7 12h5l5-2h7l1 3h-6 M7 12v10H12v-1h8l9-7" /><path d="M7 12v10" /><path d="M12 21v-8" /></g>,
  cards: <g fill="none" stroke="currentColor" strokeWidth="1.2"><rect x="8" y="8" width="21" height="15" rx="1.5" strokeWidth="1.6" /><path d="M11 7V5h21v14h-2 M14 4V2h21v14h-2" /><path d="M12 16h10 M12 19h6" strokeWidth="1.6" /></g>,
  coins: <g fill="none" stroke="currentColor"><circle cx="18" cy="9" r="6.5" /><circle cx="24.5" cy="15.5" r="7" fill="#f0f0f0" /><path d="M12 21a8 8 0 0 0 5 3 M29 4a7 7 0 0 1 2.5 4" /></g>,
  bag: <g fill="none" stroke="currentColor"><path d="M18 4h9l-2 4c6 3 7 9 5 14h-13c-2-5 0-10 4-14z" /><path d="M11 15h4v9h-4z M15 22l10 1 6-4" /></g>,
  coinHand: <g fill="none" stroke="currentColor"><circle cx="27" cy="11" r="7.5" /><circle cx="27" cy="11" r="5.5" strokeWidth=".6" /><path d="M12 9l8 10 3 3h8v-4" strokeWidth="1.4" /><path d="M26 21h5v3h-5z" /></g>,
  bars: <g fill="none" stroke="currentColor"><path d="M15 2h10v21H15z" /><path d="M15 6h10M15 10h10M15 14h10M15 18h10" /><path d="M28 13h9v10h-9z M28 16h9M28 19h9" /></g>,
  env: <g fill="none" stroke="currentColor" strokeWidth="1.2"><path d="M15 8v15h22V8" /><path d="M15 8l4-2 M37 8l-4-2 M15 11l11 7 11-7" /><circle cx="26" cy="8" r="6" fill="#f0f0f0" /></g>,
};
const navs: { t: string; i: React.ReactNode; active?: boolean; shift?: number; sym?: string; sx?: number; sy?: number }[] = [
  { t: '账户信息', i: Icon.user },
  { t: '我的持仓', i: Icon.hand, active: true, sym: '$', sx: 29, sy: 11 },
  { t: '全部报单', i: Icon.cards },
  { t: '已成交', i: Icon.coins, sym: '$', sx: 24.5, sy: 19 },
  { t: '未   成', i: Icon.bag, sym: '$', sx: 24, sy: 18 },
  { t: '已撤单', i: Icon.coinHand, shift: 9, sym: '£', sx: 27, sy: 14.5 },
  { t: '密码/资金', i: Icon.bars },
  { t: '预埋单', i: Icon.env, shift: 9, sym: '$', sx: 26, sy: 11.5 },
];
const NavSym = styled.text` font: 700 9px "Liberation Sans", sans-serif; fill: #000; `;

const tabs = ['全部合约', '国内期货', '外盘主力', '原油专列', '外汇集合', '多区同列', '技术分析', '分时走势', '成交明细'];

const Radio: React.FC<{ on?: boolean; t: string }> = ({ on, t }) => (
  <RadioItem><RadioDot $on={on} />{t}</RadioItem>
);
const Spin = () => (
  <Spinner><Tri /><Tri $down /></Spinner>
);
const LimitCard: React.FC<{ head: string; a: string; b: string }> = ({ head, a, b }) => (
  <LimitBox>
    <LimitHead><CheckBox />{head}</LimitHead>
    <LimitField><SmallLabel $w={31}>{a}</SmallLabel><SpinBox $w={86} $h={24}><SpinValue /><Spin /></SpinBox></LimitField>
    <LimitField><SmallLabel $w={31}>{b}</SmallLabel><SpinBox $w={86} $h={24}><SpinValue /><Spin /></SpinBox></LimitField>
  </LimitBox>
);

export default function App() {
  return (
    <Page>
      <Global />
      <TitleBar>
        <svg width="17" height="17" viewBox="0 0 17 17">
          <path d="M13 4.5A6.5 6.5 0 1 0 14 12" fill="none" stroke="#e01010" strokeWidth="2.6" />
          <path d="M12.5 1l1 2.4 2.5.2-2 1.6.7 2.5-2.2-1.4-2.1 1.4.7-2.5-2-1.6 2.4-.2z" fill="#e01010" />
          <circle cx="7.5" cy="9" r="1.8" fill="#e01010" />
        </svg>
        <TitleName>福星多品种自动交易系统</TitleName>
        <TitleMono $w={87}>R5__988188</TitleMono>
        <TitleMono $w={193}>{'( 行情: 2021-04-15 星期四 )'}</TitleMono>
        <TitleMono $w={310}>{'行情连接: 47.102.118.149 <远程版>'}</TitleMono>
        <TitleMono $w={81} $ml={163}>{'[ F1 帮助 ]'}</TitleMono>
        <TitleMono $w={90}>{'[ R5专享版 ]'}</TitleMono>
        <WinButtons>
          <svg width="14" height="12" viewBox="0 0 14 12"><rect x="2" y="8" width="10" height="3" fill="#44608c" /></svg>
          <svg width="14" height="12" viewBox="0 0 14 12"><rect x="4.5" y="1" width="8" height="7" fill="none" stroke="#44608c" strokeWidth="2" /><rect x="1.5" y="4" width="8" height="7" fill="#98b1e3" stroke="#44608c" strokeWidth="2" /></svg>
          <svg width="13" height="12" viewBox="0 0 13 12"><path d="M2 1l9 10M11 1L2 11" stroke="#44608c" strokeWidth="2.4" /></svg>
        </WinButtons>
      </TitleBar>
      <TopGap />
      <Workspace>
        <LeftColumn>
          <ChartGrid>
            <Chart c={charts[0]} selected />
            <Chart c={charts[1]} />
            <Chart c={charts[2]} />
            <Chart c={charts[3]} />
          </ChartGrid>
          <TabRow>
            {tabs.map((t, i) => (
              <Tab key={t} $active={i === 5} $dim={i === 8}>{t}</Tab>
            ))}
            <Clock>16:29:59</Clock>
          </TabRow>
        </LeftColumn>
        <InfoPanel>
          <InfoHeader><span>AP110</span><span>苹果10月</span></InfoHeader>
          <QuoteRow>
            <QuoteCell>卖①<QuoteValue $color="#00d800">5874</QuoteValue></QuoteCell>
            <QuoteCell>&nbsp;量①<QuoteValue $color="#10d8f8">29</QuoteValue></QuoteCell>
          </QuoteRow>
          <QuoteRow>
            <QuoteCell>买①<QuoteValue $color="#00d800">5871</QuoteValue></QuoteCell>
            <QuoteCell>&nbsp;量①<QuoteValue $color="#10d8f8">14</QuoteValue></QuoteCell>
          </QuoteRow>
          <StatGrid>
            {stats.map(s => (
              <React.Fragment key={s[0]}>
                <StatCell>{s[0]}<StatValue $color={s[2]}>{s[1]}</StatValue></StatCell>
                <StatCell>&nbsp;{s[3]}<StatValue $color={s[5]}>{s[4]}{s[6] && <Unit>{s[6]}</Unit>}</StatValue></StatCell>
              </React.Fragment>
            ))}
          </StatGrid>
          <TradeList>
            {trades.map((t, i) => (
              <TradeRow key={i}>
                <TradeTime>{t[0]}</TradeTime>
                <TradePrice>{t[1]}</TradePrice>
                <TradeVol $up={t[3]}>{t[2]}</TradeVol>
                <TradeArrow width="12" height="11" viewBox="0 0 12 11">
                  <path d={t[3] ? 'M6 0l6 6H8.5v5h-5V6H0z' : 'M6 11l6-6H8.5V0h-5v5H0z'} fill={t[3] ? '#ff3030' : '#00e000'} />
                </TradeArrow>
                <TradeFlag>开平</TradeFlag>
              </TradeRow>
            ))}
          </TradeList>
        </InfoPanel>
      </Workspace>
      <Lower>
        <Sidebar>
          {navs.map(n => (
            <NavButton key={n.t} $active={n.active}>
              <NavIcon viewBox="-4 0 44 26">
                {n.i}
                {n.sym && <NavSym x={n.sx} y={n.sy} textAnchor="middle">{n.sym}</NavSym>}
              </NavIcon>
              <NavLabel $shift={n.shift}>{n.t}</NavLabel>
            </NavButton>
          ))}
        </Sidebar>
        <TableWrap>
          <HeadRow>
            {cols.map((c, i) => <HeadCell key={i} $w={c.w}>{c.t}</HeadCell>)}
          </HeadRow>
          <Body>
            {allRows.map((r, ri) => (
              <DataRow key={ri} $sel={ri === 1}>
                {r.map((v, i) => (
                  <DataCell key={i} $w={cols[i].w} $sel={ri === 1} {...cellProps(i, v)}>{v}</DataCell>
                ))}
              </DataRow>
            ))}
          </Body>
          <FootBar>{'[F6 切换] [ 双击＝市价平仓 ]'}</FootBar>
        </TableWrap>
        <OrderPanel>
          <SideRow>
            <SideText>多单</SideText>
            <SideText $ml={90}>空单</SideText>
            <SideText $ml={20} $color="#0000e0"><b>1</b></SideText>
          </SideRow>
          <PriceBox>
            <RadioRow>
              <Radio on t="对手价" />
              <Radio t="挂单价" />
              <Radio t="自定" />
            </RadioRow>
            <SpinRow>
              <SmallLabel $w={21} $ml={2}>价</SmallLabel>
              <SpinBox $w={104}><SpinValue>5874</SpinValue><Spin /></SpinBox>
              <SmallLabel $w={18} $ml={40}>手</SmallLabel>
              <SpinBox $w={68}><SpinValue>1</SpinValue><Spin /></SpinBox>
            </SpinRow>
          </PriceBox>
          <OpenSection>
            <RadioRow>
              <Radio on t="开仓" />
              <Radio t="平昨" />
              <Radio t="平今" />
            </RadioRow>
            <BuySell>
              <TradeBtn $bg="#ff0000"><BtnPrice $color="#ffff00">5874</BtnPrice>买入</TradeBtn>
              <TradeBtn $bg="#00a000"><BtnPrice $color="#0020f0">5871</BtnPrice>卖出</TradeBtn>
            </BuySell>
            <CheckRow>
              <CheckBox $on>√</CheckBox>自动交易
              <Spacer $w={68} />
              <CheckBox />定时清仓
            </CheckRow>
          </OpenSection>
          <LimitRow>
            <LimitCard head="多单启用" a="止盈" b="止损" />
            <LimitCard head="空单启用" a="止损" b="止盈" />
          </LimitRow>
        </OrderPanel>
      </Lower>
      <StatusBar>
        <StatusItem $w={59}>[ USD ]</StatusItem>
        <StatusItem $w={114}>可用: 1000000.00</StatusItem>
        <StatusItem $w={114}>权益: 1000000.00</StatusItem>
        <StatusItem $w={60}>已盈  一</StatusItem>
        <StatusItem $w={60}>持盈  一</StatusItem>
        <StatusItem $w={72}>保证金  一</StatusItem>
        <StatusItem $w={71}>总盈亏  一</StatusItem>
        <StatusItem $w={61}>冻结  一</StatusItem>
        <StatusItem $w={80}>手续费: 0</StatusItem>
        <StatusRight>[6] 切换指标 RICH1K</StatusRight>
      </StatusBar>
      <BottomEdge />
      <Overlay viewBox="0 0 1366 739">
        {arrows.map((a, i) => (
          <polygon key={i} points={arrowPoints(a[0], a[1])} fill="#fbb40a" />
        ))}
        {locks.map(([x, y], i) => (
          <ChartText key={i} x={x} y={y} dominantBaseline="central" $size={23} $color="#ffe800" stroke="#e80000" strokeWidth={0.7} paintOrder="stroke">交易锁定</ChartText>
        ))}
      </Overlay>
      <Watermark>https://blog.csdn.net/qq_39755765</Watermark>
    </Page>
  );
}
